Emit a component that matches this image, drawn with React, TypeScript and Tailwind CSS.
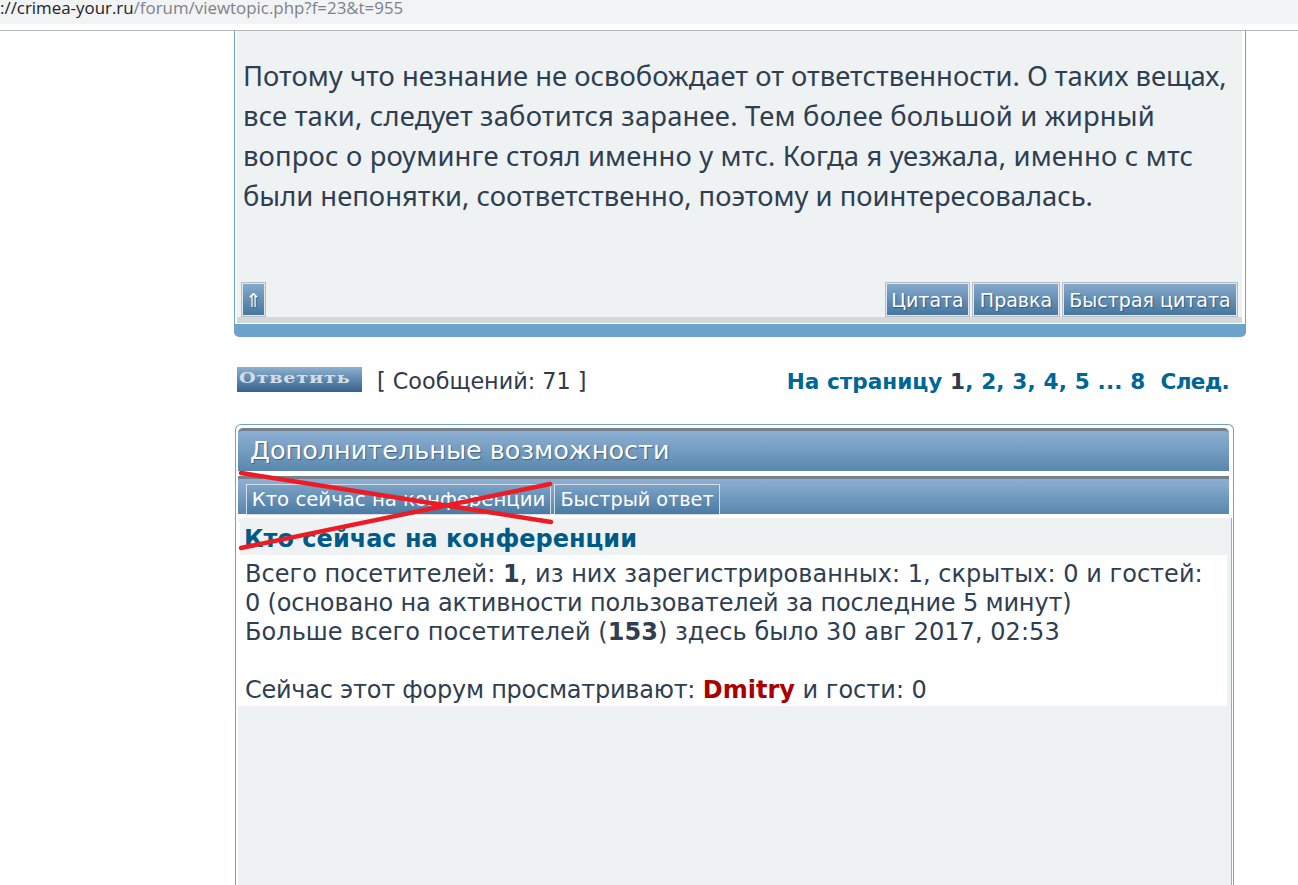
const dv = "font-['DejaVu_Sans','Verdana',sans-serif]";

function Btn({ children, className = "" }: { children: React.ReactNode; className?: string }) {
  return (
    <div className={`flex h-[35px] items-center justify-center border border-[#b9bcc0] bg-gradient-to-b from-[#86abcc] to-[#44759f] pt-px text-[19px] leading-none text-white shadow-[inset_0_0_0_1px_#e4e8ec] [text-shadow:1px_1px_1px_#33587c] ${className}`}>
      {children}
    </div>
  );
}

const barClass = "border-t-[3px] border-[#74828f] bg-gradient-to-b from-[#8db0d3] to-[#5a87ad]";

function Tab({ children, className = "" }: { children: React.ReactNode; className?: string }) {
  return (
    <div className={`flex h-[31px] items-center justify-center border border-[#d5dde5] bg-gradient-to-b from-[#7ba2c6] to-[#4b7aa3] pt-px leading-none text-white ${className}`}>
      {children}
    </div>
  );
}

export default function App() {
  return (
    <div className={`relative flex h-[885px] w-[1298px] flex-col overflow-hidden bg-white text-[#2f3a4a] ${dv}`}>
      <div className="h-[24px] overflow-hidden bg-[#f1f3f5] font-['Open_Sans',sans-serif] text-[16.9px] leading-[16px] text-[#7d8287]">
        <div className="whitespace-pre">
          <span className="text-[#222]">://crimea-your.ru</span>/forum/viewtopic.php?f=23&amp;t=955
        </div>
      </div>
      <div className="h-[7px] border-b border-[#b5b7b9]" />

      <div className="ml-[234px] flex w-[1012px] flex-col">
        {/* Post */}
        <div className="flex h-[293px] flex-col border-x border-[#6ca4cc] pr-[3px] pl-[2px]">
          <div className="flex min-h-0 flex-1 flex-col bg-[#eef2f3]">
            <div className="pt-[25px] pl-[6px] font-['Noto_Sans',sans-serif] text-[27.4px] leading-[40px] text-[#2f3e50]">
              Потому что незнание не освобождает от ответственности. О таких вещах,
              <br />
              <span className="tracking-[0.19px]">все таки, следует заботится заранее. Тем более большой и жирный</span>
              <br />
              <span className="tracking-[0.16px]">вопрос о роуминге стоял именно у мтс. Когда я уезжала, именно с мтс</span>
              <br />
              были непонятки, соответственно, поэтому и поинтересовалась.
            </div>
            <div className="mt-auto flex justify-between pr-[4px] pl-[4px]">
              <Btn className="w-[25px] text-[15px]">⇑</Btn>
              <div className="flex gap-[2px]">
                <Btn className="w-[85px]">Цитата</Btn>
                <Btn className="w-[88px]">Правка</Btn>
                <Btn className="w-[176px]">Быстрая цитата</Btn>
              </div>
            </div>
            <div className="h-[6px] bg-[#d3d7de]" />
          </div>
          <div className="h-px" />
        </div>
        <div className="h-[13px] rounded-b-[5px] bg-[#6ca4cc]" />

        {/* Action row */}
        <div className="mt-[30px] flex h-[25px] items-center justify-between pr-[17px] pl-[3px]">
          <div className="flex items-center">
            <div className="flex h-[25px] w-[125px] items-start justify-center bg-gradient-to-b from-[#8db0d0] to-[#35628c] pr-[9px] font-['DejaVu_Serif',serif] text-[14px] leading-[22px] font-bold tracking-[0.6px] text-[#d2dee7]">
              <span className="inline-block scale-x-[1.37]">Ответить</span>
            </div>
            <span className="mt-[4px] ml-[15px] text-[22.3px] leading-none text-[#2f3a4a]">[ Сообщений: 71 ]</span>
          </div>
          <div className="mt-[4px] text-[21.6px] leading-none font-bold whitespace-pre text-[#006597]">
            На страницу{" "}
            <span className="tracking-[0.15px]">
              <span className="text-[#2f3a4a]">1</span>, 2, 3, 4, 5 ... 8
            </span>
            {"  "}
            <span className="tracking-[-0.7px]">След.</span>
          </div>
        </div>
      </div>

      {/* Extras */}
      <div className="mt-[32px] ml-[235px] flex w-[999px] flex-1 flex-col rounded-t-[6px] border-x border-t border-[#6ca4cc] pt-[3px] pr-[1px] pl-[2px]">
        <div className={`mr-[3px] flex h-[43px] items-center rounded-t-[5px] pl-[12px] text-[25.5px] leading-none text-white [text-shadow:1px_1px_1px_#3d6385] ${barClass}`}>
          Дополнительные возможности
        </div>
        <div className={`mt-[5px] mr-[3px] flex h-[38px] gap-[3px] pt-[5px] pl-[8px] ${barClass}`}>
          <Tab className="w-[305px] text-[19.7px]">Кто сейчас на конференции</Tab>
          <Tab className="w-[166px] text-[19.2px]">Быстрый ответ</Tab>
        </div>
        <div className="mt-[4px] flex-1 border-r border-[#a9a9a9] bg-[#eef2f3]">
          <div className="mt-[4px] mr-[4px] bg-white pl-[2px]">
            <div className="flex h-[33px] items-center bg-[#eef2f3] pt-px pl-[4px] text-[24px] leading-none font-bold text-[#005a87]">
              Кто сейчас на конференции
            </div>
            <div className="pt-[5px] pb-px pl-[5px] text-[24px] leading-[29px] text-[#2f3e50]">
              <span className="tracking-[0.03px]">
                Всего посетителей: <b>1</b>, из них зарегистрированных: 1, скрытых: 0 и гостей:
              </span>
              <br />
              <span className="tracking-[-0.16px]">0 (основано на активности пользователей за последние 5 минут)</span>
              <br />
              <span className="tracking-[0.05px]">
                Больше всего посетителей (<b>153</b>) здесь было 30 авг 2017, 02:53
              </span>
              <br />
              <br />
              <span className="tracking-[-0.25px]">Сейчас этот форум просматривают:</span>{" "}
              <b className="text-[#aa0000]">Dmitry</b> и гости: 0
            </div>
          </div>
        </div>
      </div>

      <svg className="pointer-events-none absolute top-0 left-0" width="1298" height="885" fill="none">
        <path d="M241 473 L551 522" stroke="#ed1c24" strokeWidth="4.5" strokeLinecap="round" />
        <path d="M241 548 L550 484" stroke="#ed1c24" strokeWidth="4.5" strokeLinecap="round" />
      </svg>
    </div>
  );
}
